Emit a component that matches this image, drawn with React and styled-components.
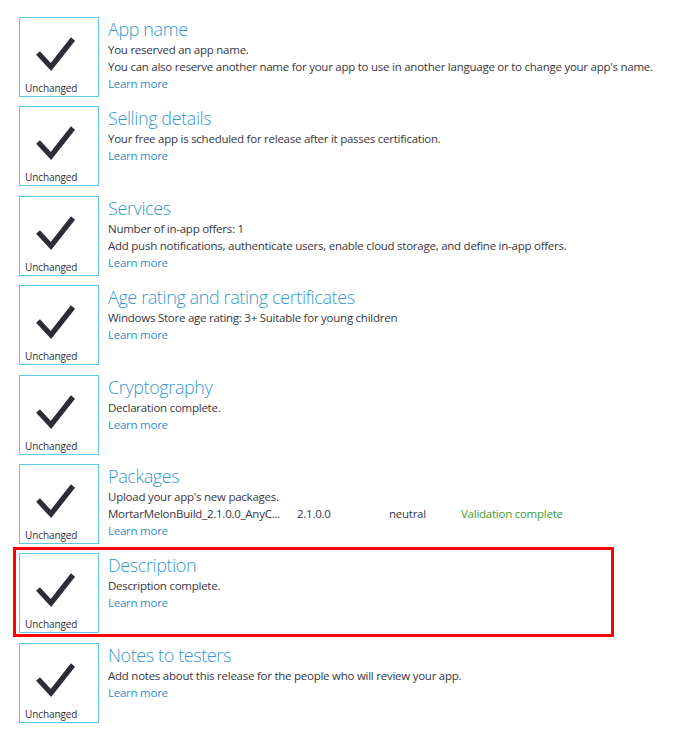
import React from "react";
import styled, {createGlobalStyle} from "styled-components";

const GlobalStyle = createGlobalStyle`
  html, body {
    margin: 0;
    padding: 0;
    background: #ffffff;
  }
  body {
    font-family: "Open Sans", "Liberation Sans", sans-serif;
    color: #383640;
  }
`

const Page = styled.div`
  width: 680px;
  height: 744px;
  padding: 17px 0 0 19px;
  box-sizing: border-box;
  display: flex;
  flex-direction: column;
  gap: 9.4px;
  overflow: hidden;
`

const Row = styled.div`
  position: relative;
  display: flex;
  gap: 9px;
  height: 80px;

  ${({$highlight}) => $highlight && `
    &::after {
      content: "";
      position: absolute;
      top: -6px;
      left: -6px;
      bottom: -4px;
      width: 601px;
      border: 3px solid #ff0000;
      box-sizing: border-box;
      pointer-events: none;
    }
  `}
`

const Tile = styled.div`
  position: relative;
  flex: 0 0 auto;
  width: 80px;
  height: 80px;
  box-sizing: border-box;
  border: 1px solid #5ec8ea;
  display: flex;
  flex-direction: column;
  align-items: flex-start;
  justify-content: space-between;
  padding: 0 0 2px 5px;
`

const Check = styled.svg`
  display: block;
  margin: 18px 0 0 13px;
  overflow: visible;
`

const TileLabel = styled.span`
  font-size: 10px;
  line-height: 12px;
  color: #2d2d35;
  letter-spacing: -0.1px;
`

const Body = styled.div`
  display: flex;
  flex-direction: column;
  padding-top: 1px;
`

const Title = styled.div`
  font-size: 18px;
  font-weight: 300;
  line-height: 22px;
  color: #3599cf;
  letter-spacing: -0.4px;
  margin-bottom: 1px;
`

const Line = styled.div`
  font-size: 11.5px;
  line-height: 17px;
  letter-spacing: -0.25px;
  color: ${({$tone}) => ($tone === "good" ? "#3f9a35" : "#383640")};
  white-space: nowrap;
`

const LearnMore = styled.a`
  font-size: 11.5px;
  line-height: 17px;
  letter-spacing: -0.25px;
  color: #2f8cca;
  text-decoration: none;
  cursor: pointer;
`

const PackageRow = styled.div`
  display: grid;
  grid-template-columns: 189px 92px 72px auto;
`

const CheckIcon = () => (
  <Check width="36" height="34" viewBox="0 0 36 34">
    <polyline
      points="0,17 13,31 35,3"
      fill="none"
      stroke="#2d2d37"
      strokeWidth="5.3"
      strokeLinecap="butt"
      strokeLinejoin="miter"
    />
  </Check>
)

const sections = [
  {
    title: "App name",
    lines: [
      "You reserved an app name.",
      "You can also reserve another name for your app to use in another language or to change your app's name.",
    ],
  },
  {title: "Selling details", lines: ["Your free app is scheduled for release after it passes certification."]},
  {
    title: "Services",
    lines: [
      "Number of in-app offers: 1",
      "Add push notifications, authenticate users, enable cloud storage, and define in-app offers.",
    ],
  },
  {title: "Age rating and rating certificates", lines: ["Windows Store age rating: 3+ Suitable for young children"]},
  {title: "Cryptography", lines: ["Declaration complete."]},
  {title: "Packages", lines: ["Upload your app's new packages."], packages: true},
  {title: "Description", lines: ["Description complete."], highlight: true},
  {title: "Notes to testers", lines: ["Add notes about this release for the people who will review your app."]},
]

export default function App() {
  return (
    <>
      <GlobalStyle/>
      <Page>
        {sections.map((s) => (
          <Row key={s.title} $highlight={s.highlight}>
            <Tile>
              <CheckIcon/>
              <TileLabel>Unchanged</TileLabel>
            </Tile>
            <Body>
              <Title>{s.title}</Title>
              {s.lines.map((l) => <Line key={l}>{l}</Line>)}
              {s.packages &&
                <PackageRow>
                  <Line>MortarMelonBuild_2.1.0.0_AnyC...</Line>
                  <Line>2.1.0.0</Line>
                  <Line>neutral</Line>
                  <Line $tone="good">Validation complete</Line>
                </PackageRow>
              }
              <LearnMore>Learn more</LearnMore>
            </Body>
          </Row>
        ))}
      </Page>
    </>
  )
}
